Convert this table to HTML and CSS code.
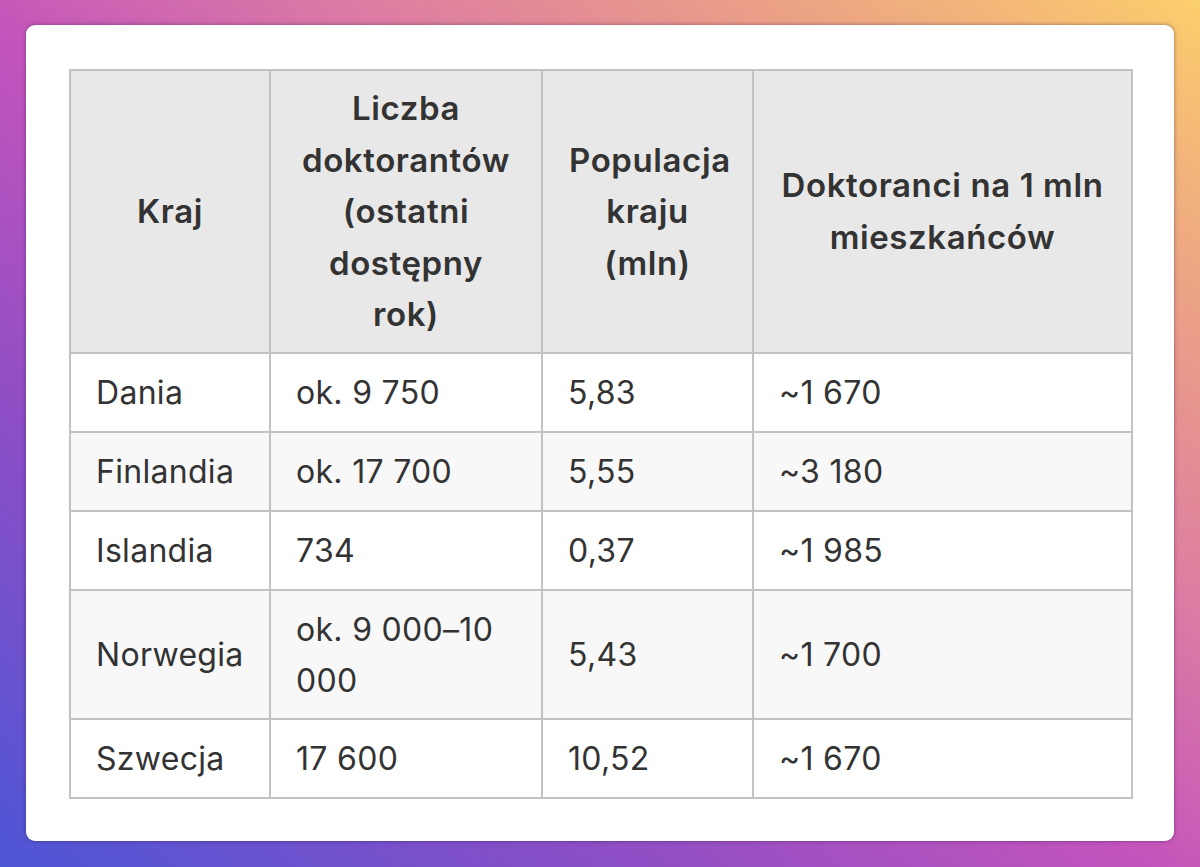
FILE: index.html
```html
<!DOCTYPE html>
<html lang="pl">
<head>
<meta charset="utf-8">
<title>Doktoranci</title>
<link rel="stylesheet" href="styles.css">
</head>
<body>
<main class="card">
  <table class="data">
    <colgroup>
      <col class="c1"><col class="c2"><col class="c3"><col class="c4">
    </colgroup>
    <thead>
      <tr>
        <th>Kraj</th>
        <th>Liczba doktorantów (ostatni dostępny rok)</th>
        <th>Populacja kraju (mln)</th>
        <th>Doktoranci na 1 mln mieszkańców</th>
      </tr>
    </thead>
    <tbody>
      <tr><td>Dania</td><td>ok. 9 750</td><td>5,83</td><td>~1 670</td></tr>
      <tr><td>Finlandia</td><td>ok. 17 700</td><td>5,55</td><td>~3 180</td></tr>
      <tr><td>Islandia</td><td>734</td><td>0,37</td><td>~1 985</td></tr>
      <tr><td>Norwegia</td><td>ok. 9 000–10 000</td><td>5,43</td><td>~1 700</td></tr>
      <tr><td>Szwecja</td><td>17 600</td><td>10,52</td><td>~1 670</td></tr>
    </tbody>
  </table>
</main>
</body>
</html>
```

FILE: styles.css
```css
* { box-sizing: border-box; }
html, body { margin: 0; height: 100%; }
body {
  width: 1200px;
  height: 867px;
  padding: 25px 26px 26px 26px;
  background: linear-gradient(to top right, #4c56d6 0%, #8a4ec6 25%, #c454bc 48%, #dc7aa4 64%, #e8988c 78%, #f3b47a 90%, #fbcf6c 100%);
  font-family: Inter, "Open Sans", "Liberation Sans", sans-serif;
  color: #333;
  overflow: hidden;
}
.card {
  background: #fff;
  border-radius: 9px;
  height: 816px;
  padding: 44px 43px;
  box-shadow: 0 0 4px rgba(40, 20, 60, 0.45);
}
.data {
  border-collapse: collapse;
  table-layout: fixed;
  width: 1062px;
  font-size: 32px;
  line-height: 51.5px;
  letter-spacing: 0.3px;
}
.c1 { width: 200px; }
.c2 { width: 272px; }
.c3 { width: 211px; }
.c4 { width: 379px; }
.data th, .data td {
  border: 2px solid #c2c2c2;
  padding: 13px 25px 11px;
  vertical-align: middle;
}
.data th {
  background: #e8e8e8;
  font-weight: 600;
  font-size: 33px;
  letter-spacing: 0.6px;
  text-align: center;
  padding: 12px 26px 11px;
  color: #333;
}
.data td {
  text-align: left;
  font-weight: 400;
  height: 79px;
}
.data tbody tr:nth-child(even) td { background: #f8f8f8; }
```
